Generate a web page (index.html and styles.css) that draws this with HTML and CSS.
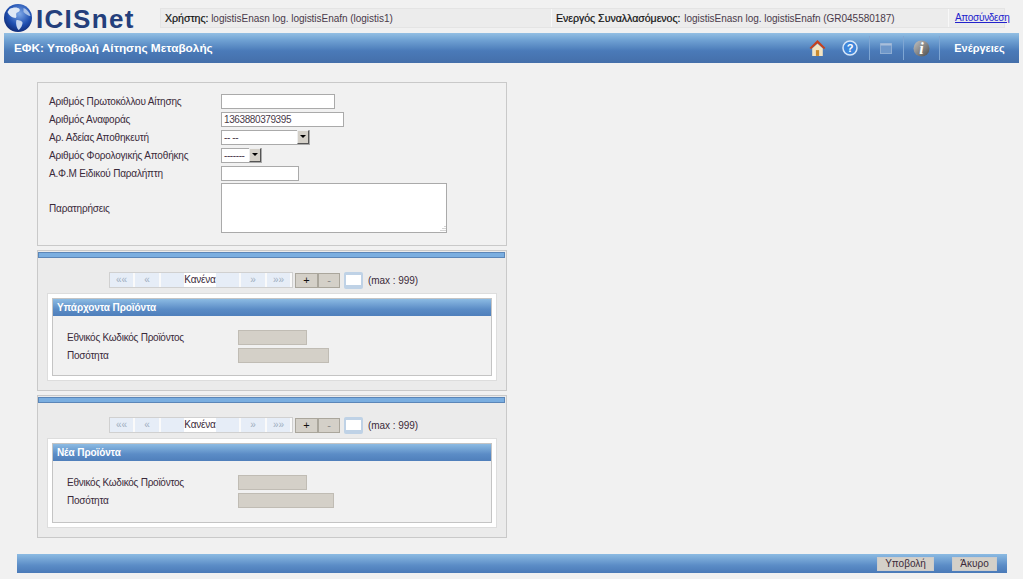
FILE: index.html
```html
<!DOCTYPE html>
<html lang="el">
<head>
    <meta charset="UTF-8">
    <title>ICISnet</title>
    <link rel="stylesheet" href="styles.css">
</head>
<body>
    <div class="top">
        <div class="logo">
            <svg class="globe" width="30" height="30" viewBox="0 0 29 30">
                <defs>
                    <radialGradient id="sea" cx="0.55" cy="0.35" r="0.75">
                        <stop offset="0" stop-color="#7fa9e8"/>
                        <stop offset="0.55" stop-color="#1f4fb0"/>
                        <stop offset="1" stop-color="#0b1f63"/>
                    </radialGradient>
                </defs>
                <circle cx="14.5" cy="15" r="14" fill="url(#sea)"/>
                <path d="M6 6c4-2 8-2 10 0 1 2-1 3-3 4-1 2 1 4-1 5-3 0-7-3-8-6z" fill="#dfe8f5"/>
                <path d="M13 17c3 0 6 1 6 3s-2 6-4 7c-2-2-3-7-2-10z" fill="#c7d6ee"/>
                <path d="M20 5c3 1 6 4 7 8-2 0-5-2-7-4z" fill="#a8c0e6"/>
            </svg>
            <span class="logo-text">ICISnet</span>
        </div>
        <div class="info">
            <div class="info-cell user"><b>Χρήστης:</b> logistisEnasn log. logistisEnafn (logistis1)</div>
            <div class="info-cell trader"><b>Ενεργός Συναλλασόμενος:</b> logistisEnasn log. logistisEnafn (GR045580187)</div>
            <div class="info-cell logout"><a href="#">Αποσύνδεση</a></div>
        </div>
    </div>

    <div class="titlebar">
        <h1>ΕΦΚ: Υποβολή Αίτησης Μεταβολής</h1>
        <div class="tools">
            <span class="tool tool-home">
                <svg width="17" height="18" viewBox="0 0 16 17">
                    <path d="M8 1L0.5 8.5 2 9.5 8 4l6 5.500 1.500-1z" fill="#c8401c"/>
                    <path d="M3 9l5-4.500 5 4.500v7H3z" fill="#f3e4c2"/>
                    <rect x="6.500" y="10.500" width="3" height="5.500" fill="#c98a2e"/>
                </svg>
            </span>
            <span class="tool tool-help">
                <svg width="16" height="16" viewBox="0 0 16 16">
                    <circle cx="8" cy="8" r="7" fill="#3f86da" stroke="#d6e6f8" stroke-width="1.500"/>
                    <text x="8" y="12" text-anchor="middle" class="help-mark">?</text>
                </svg>
            </span>
            <span class="tool tool-window sep">
                <svg width="12" height="11" viewBox="0 0 12 11">
                    <rect x="0.500" y="0.500" width="11" height="10" fill="#6f97c9" stroke="#8fadd2"/>
                    <rect x="0.500" y="0.500" width="11" height="2" fill="#a9bfdb"/>
                </svg>
            </span>
            <span class="tool tool-info sep">
                <svg width="17" height="17" viewBox="0 0 16 16">
                    <defs>
                        <linearGradient id="metal" x1="0" y1="0" x2="1" y2="1">
                            <stop offset="0" stop-color="#c4c4c4"/>
                            <stop offset="1" stop-color="#4c4c4c"/>
                        </linearGradient>
                    </defs>
                    <circle cx="8" cy="8" r="7.500" fill="url(#metal)"/>
                    <text x="8" y="13" text-anchor="middle" class="info-mark">i</text>
                </svg>
            </span>
            <span class="tool tool-actions sep">Ενέργειες</span>
        </div>
    </div>

    <div class="content">
        <div class="panel main-form">
            <div class="row"><label>Αριθμός Πρωτοκόλλου Αίτησης</label><input class="w114" type="text"></div>
            <div class="row"><label>Αριθμός Αναφοράς</label><input class="w123" type="text" value="1363880379395"></div>
            <div class="row"><label>Αρ. Αδείας Αποθηκευτή</label><span class="combo w89"><span>-- --</span><i></i></span></div>
            <div class="row"><label>Αριθμός Φορολογικής Αποθήκης</label><span class="combo w41"><span>-------</span><i></i></span></div>
            <div class="row"><label>Α.Φ.Μ Ειδικού Παραλήπτη</label><input class="w78" type="text"></div>
            <div class="row row-notes"><label>Παρατηρήσεις</label>
                <span class="notes">
                    <svg class="grip" width="7" height="7" viewBox="0 0 7 7"><path d="M6 1v1M4 3v1M6 3v1M2 5v1M4 5v1M6 5v1" stroke="#aaa"/></svg>
                </span>
            </div>
        </div>

        <div class="panel list-panel first-list">
            <div class="strip"></div>
            <div class="pager">
                <div class="pages">
                    <span class="pg p-first">««</span><span class="pg p-prev">«</span><span class="pg p-blank"></span><span class="pg-current">Κανένα</span><span class="pg p-blank2"></span><span class="pg p-next">»</span><span class="pg p-last">»»</span>
                </div>
                <span class="btn-sm">+</span><span class="btn-sm minus">-</span>
                <span class="pg-input"><i></i></span>
                <span class="max">(max : 999)</span>
            </div>
            <div class="box">
                <div class="box-inner">
                    <div class="box-head">Υπάρχοντα Προϊόντα</div>
                    <div class="box-body">
                        <div class="row"><label>Εθνικός Κωδικός Προϊόντος</label><span class="ro w69"></span></div>
                        <div class="row"><label>Ποσότητα</label><span class="ro w91"></span></div>
                    </div>
                </div>
            </div>
        </div>

        <div class="panel list-panel second-list">
            <div class="strip"></div>
            <div class="pager">
                <div class="pages">
                    <span class="pg p-first">««</span><span class="pg p-prev">«</span><span class="pg p-blank"></span><span class="pg-current">Κανένα</span><span class="pg p-blank2"></span><span class="pg p-next">»</span><span class="pg p-last">»»</span>
                </div>
                <span class="btn-sm">+</span><span class="btn-sm minus">-</span>
                <span class="pg-input"><i></i></span>
                <span class="max">(max : 999)</span>
            </div>
            <div class="box">
                <div class="box-inner">
                    <div class="box-head">Νέα Προϊόντα</div>
                    <div class="box-body">
                        <div class="row"><label>Εθνικός Κωδικός Προϊόντος</label><span class="ro w69"></span></div>
                        <div class="row"><label>Ποσότητα</label><span class="ro w96"></span></div>
                    </div>
                </div>
            </div>
        </div>
    </div>

    <div class="footer">
        <button class="foot-btn submit" type="button">Υποβολή</button>
        <button class="foot-btn cancel" type="button">Άκυρο</button>
    </div>
</body>
</html>
```

FILE: styles.css
```css
html, body {
    margin: 0;
    height: 579px;
    overflow: hidden;
}
body {
    background-color: #f1f1f1;
    color: #3a2a3a;
    font-family: "Liberation Sans", Arial, sans-serif;
    font-size: 10px;
}
.top {
    display: flex;
    height: 33px;
}
.logo {
    display: flex;
    align-items: flex-start;
    width: 160px;
    padding: 3px 0 0 3px;
    box-sizing: border-box;
}
.logo-text {
    margin: 1px 0 0 3px;
    color: #243f7c;
    font-size: 26px;
    line-height: 30px;
    font-weight: bold;
    letter-spacing: 1.3px;
}
.info {
    display: flex;
    box-sizing: border-box;
    width: 845px;
    height: 20px;
    margin-top: 8px;
    background-color: #ececec;
    border: 1px solid #e4e4e4;
    line-height: 18px;
}
.info-cell {
    box-sizing: border-box;
    padding-left: 4px;
    border-right: 1px solid #f8f8f8;
    color: #4a3a4a;
    letter-spacing: -0.03px;
}
.info-cell b {
    color: #111;
    font-weight: normal;
    font-size: 10.6px;
    -webkit-text-stroke: 0.2px #111;
}
.user {
    width: 391px;
}
.trader {
    width: 397px;
}
.trader b {
    margin-right: 1px;
}
.logout {
    width: 55px;
    padding-left: 6px;
    border-right: 0;
    letter-spacing: -0.3px;
}
.logout a {
    color: #2222cc;
}
.titlebar {
    display: flex;
    align-items: center;
    justify-content: space-between;
    height: 30px;
    margin: 0 4px;
    background: linear-gradient(#93bfe3 0, #6ea0d2 25%, #4a7ab8 60%, #446faa 100%);
}
.titlebar h1 {
    margin: 0 0 0 10px;
    color: #fff;
    font-size: 11.8px;
    font-weight: bold;
}
.tools {
    display: flex;
    height: 24px;
    align-items: center;
}
.tool {
    display: flex;
    align-items: center;
    justify-content: center;
    box-sizing: border-box;
    height: 24px;
}
.tool.sep {
    border-left: 1px solid #7fa6d3;
}
.tool-home {
    width: 33px;
    padding-right: 5px;
}
.tool-help {
    width: 33px;
    padding-right: 5px;
}
.tool-window {
    width: 34px;
    padding-right: 2px;
}
.tool-info {
    width: 36px;
}
.tool-actions {
    width: 80px;
    color: #fff;
    font-size: 11px;
    font-weight: bold;
}
.help-mark {
    fill: #fff;
    font: bold 11px "Liberation Sans", sans-serif;
}
.info-mark {
    fill: #fff;
    font: italic bold 15px "Liberation Serif", serif;
}
.content {
    width: 470px;
    margin: 19px 0 0 37px;
}
.panel {
    box-sizing: border-box;
    width: 470px;
    margin-bottom: 4px;
    border: 1px solid #c9c9c9;
}
.main-form {
    height: 164px;
    padding: 9px 0 0 11px;
}
.row {
    display: flex;
    align-items: center;
    height: 18px;
}
.row label {
    width: 172px;
    flex: none;
    letter-spacing: -0.18px;
}
.row input, .combo {
    box-sizing: border-box;
    height: 15px;
    margin: 0;
    padding: 0 2px;
    border: 1px solid #aaa;
    background-color: #fff;
    color: #4a3a4a;
    font-family: "Liberation Sans", Arial, sans-serif;
    font-size: 10px;
    letter-spacing: -0.4px;
}
.w114 { width: 114px; }
.w123 { width: 123px; }
.w78 { width: 78px; }
.w89 { width: 89px; }
.w41 { width: 41px; }
.combo {
    display: flex;
    align-items: center;
    justify-content: space-between;
    padding-right: 0;
}
.combo i {
    position: relative;
    box-sizing: border-box;
    width: 12px;
    height: 14px;
    background-color: #d4d0c8;
    border: 1px solid;
    border-color: #eee #555 #555 #eee;
}
.combo i::after {
    content: "";
    position: absolute;
    top: 4px;
    left: 2px;
    border: 3px solid transparent;
    border-top-color: #000;
}
.row-notes {
    height: 50px;
    margin-top: 1px;
}
.notes {
    position: relative;
    box-sizing: border-box;
    width: 226px;
    height: 50px;
    background-color: #fff;
    border: 1px solid #aaa;
}
.grip {
    position: absolute;
    right: 0;
    bottom: 0;
}
.list-panel {
    background-color: #ebebeb;
    padding: 1px 0 0 0;
}
.first-list {
    height: 141px;
}
.second-list {
    height: 143px;
}
.strip {
    height: 4px;
    margin-right: 1px;
    background-color: #7aaee0;
    border: 1px solid #5b86b8;
}
.pager {
    display: flex;
    align-items: center;
    height: 16px;
    margin: 14px 0 0 71px;
}
.pages {
    display: flex;
    box-sizing: border-box;
    width: 184px;
    height: 16px;
    margin-right: 2px;
    border: 1px solid #d0d0d0;
    background-color: #fafafa;
}
.pg {
    display: block;
    height: 14px;
    margin-right: 2px;
    background-color: #e6edf7;
    color: #9fadc0;
    line-height: 13px;
    text-align: center;
}
.p-first { width: 23px; }
.p-prev { width: 24px; }
.p-blank { width: 23px; margin-right: 0; }
.p-blank2 { width: 23px; }
.p-next { width: 24px; }
.p-last { width: 23px; margin-right: 0; }
.pg-current {
    width: 32px;
    background-color: #fff;
    line-height: 14px;
    text-align: center;
    color: #3a2a3a;
    letter-spacing: -0.2px;
}
.btn-sm {
    box-sizing: border-box;
    width: 23px;
    height: 15px;
    border: 1px solid #aaa69c;
    background-color: #d4d0c8;
    color: #111;
    font-size: 11px;
    line-height: 12px;
    text-align: center;
}
.btn-sm.minus {
    width: 22px;
    color: #888;
}
.pg-input {
    box-sizing: border-box;
    width: 19px;
    height: 17px;
    margin-left: 4px;
    padding: 3px 2px;
    background-color: #bfd2e6;
    border-radius: 2px;
}
.pg-input i {
    display: block;
    height: 10px;
    background-color: #fff;
}
.max {
    margin-left: 5px;
    letter-spacing: -0.05px;
}
.box {
    box-sizing: border-box;
    margin: 5px 9px 0;
    height: 88px;
    padding: 4px;
    background-color: #fff;
    border: 1px solid #ddd;
}
.second-list .box {
    height: 90px;
}
.box-inner {
    box-sizing: border-box;
    height: 78px;
    border: 1px solid #c4c4c4;
    background-color: #f1f1f1;
}
.second-list .box-inner {
    height: 80px;
}
.box-head {
    height: 17px;
    padding-left: 4px;
    background: linear-gradient(#8cbbe3, #5b8cc6 60%, #4f7fbb);
    color: #fff;
    font-weight: bold;
    line-height: 17px;
    letter-spacing: -0.1px;
}
.box-body {
    padding: 12px 0 0 14px;
}
.box-body .row label {
    width: 171px;
    letter-spacing: -0.25px;
}
.ro {
    box-sizing: border-box;
    height: 15px;
    background-color: #d4d0c8;
    border: 1px solid #c0bcb4;
}
.w69 { width: 69px; }
.w91 { width: 91px; }
.w96 { width: 96px; }
.footer {
    display: flex;
    align-items: center;
    justify-content: flex-end;
    box-sizing: border-box;
    width: 990px;
    height: 19px;
    margin: 16px 0 0 17px;
    padding-right: 10px;
    background: linear-gradient(#8cbbe3, #5b8cc6 60%, #4a7ab8);
}
.foot-btn {
    box-sizing: border-box;
    height: 14px;
    padding: 0;
    border: 1px solid #ccc;
    background-color: #d4d0c8;
    color: #3a2a3a;
    font-family: "Liberation Sans", Arial, sans-serif;
    font-size: 10px;
    line-height: 12px;
}
.submit {
    width: 57px;
    margin-right: 18px;
}
.cancel {
    width: 45px;
}
```
